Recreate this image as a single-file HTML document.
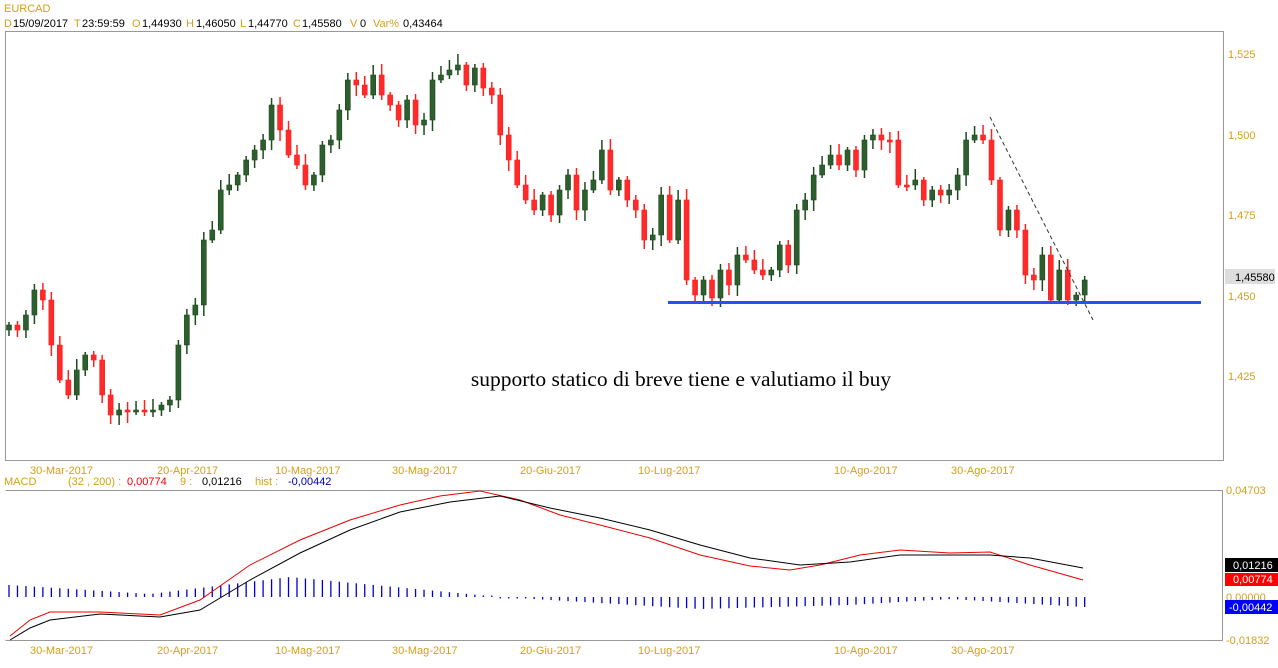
<!DOCTYPE html>
<html><head><meta charset="utf-8"><style>
body{margin:0;background:#fff;width:1278px;height:668px;overflow:hidden;font-family:"Liberation Sans",sans-serif}
svg{position:absolute;left:0;top:0}
.l{fill:#d4a017;font-size:11px}
.v{fill:#000;font-size:11px}
</style></head><body>
<svg id="s" width="1278" height="668" xmlns="http://www.w3.org/2000/svg">
<text x="4" y="12" class="l" font-size="12">EURCAD</text>
<text x="4" y="27" class="l">D</text><text x="13" y="27" class="v">15/09/2017</text>
<text x="74" y="27" class="l">T</text><text x="82" y="27" class="v">23:59:59</text>
<text x="132" y="27" class="l">O</text><text x="142" y="27" class="v">1,44930</text>
<text x="186" y="27" class="l">H</text><text x="196" y="27" class="v">1,46050</text>
<text x="240" y="27" class="l">L</text><text x="248" y="27" class="v">1,44770</text>
<text x="293" y="27" class="l">C</text><text x="302" y="27" class="v">1,45580</text>
<text x="350" y="27" class="l">V</text><text x="360" y="27" class="v">0</text>
<text x="373" y="27" class="l">Var%</text><text x="403" y="27" class="v">0,43464</text>
<path d="M5.5 31.5H1223.5V460.5H5.5Z M5.5 490.5H1222.5V640.5H5.5" fill="none" stroke="#999"/>
<g id="c"></g>
<line x1="668" y1="302.5" x2="1201" y2="302.5" stroke="#2255ee" stroke-width="3"/>
<line x1="990" y1="117" x2="1093" y2="320" stroke="#333" stroke-dasharray="4,3"/>
<text x="681" y="386" text-anchor="middle" font-family="Liberation Serif,serif" font-size="21.5">supporto statico di breve tiene e valutiamo il buy</text>
<text x="1228" y="58" class="l">1,525</text><text x="1228" y="139" class="l">1,500</text><text x="1228" y="219" class="l">1,475</text><text x="1228" y="300" class="l">1,450</text><text x="1228" y="380" class="l">1,425</text>
<rect x="1225" y="269" width="50" height="15" fill="#ddd"/><text x="1235" y="281" class="v">1,45580</text>
<g id="d"></g>
<text x="4" y="485" class="l">MACD</text><text x="68" y="485" class="l">(32 , 200) :</text><text x="127" y="485" fill="#e00" font-size="11">0,00774</text><text x="180" y="485" class="l">9 :</text><text x="202" y="485" class="v">0,01216</text><text x="255" y="485" class="l">hist :</text><text x="288" y="485" fill="#00a" font-size="11">-0,00442</text>
<text x="1226" y="494" class="l">0,04703</text><text x="1226" y="601" class="l">0,00000</text><text x="1226" y="644" class="l">-0,01832</text>
<rect x="1225" y="558" width="53" height="14" fill="#000"/><text x="1233" y="569" fill="#fff" font-size="11">0,01216</text>
<rect x="1225" y="573" width="53" height="13" fill="#f00"/><text x="1233" y="583" fill="#fff" font-size="11">0,00774</text>
<rect x="1225" y="600" width="53" height="14" fill="#00f"/><text x="1229" y="611" fill="#fff" font-size="11">-0,00442</text>
<polyline fill="none" stroke="#e00" points="10,636 30,620 50,612 100,612 160,615 200,600 250,565 300,540 350,520 400,505 440,496 480,491 520,500 560,515 600,525 650,538 700,555 750,566 790,570 820,565 860,555 900,550 950,553 990,552 1030,565 1083,580"/>
<polyline fill="none" stroke="#000" points="10,640 30,628 50,620 100,614 160,617 200,610 250,580 300,553 350,530 400,512 450,502 500,496 550,508 600,518 650,530 700,545 750,558 800,565 850,562 900,555 950,555 990,555 1030,558 1083,568"/>
</svg>
<script>
var Y=[325,330,315,290,300,345,380,395,370,355,360,395,415,410,412,410,412,410,405,400,345,315,305,240,230,190,185,175,160,150,140,105,130,155,165,185,175,145,140,110,80,85,95,75,95,105,120,100,125,120,80,75,70,65,85,68,88,95,135,160,185,200,210,195,215,190,175,210,190,180,150,190,180,200,210,240,235,195,240,200,280,295,280,298,270,285,255,260,270,275,270,245,265,210,200,175,165,155,165,150,170,140,135,140,140,185,185,180,200,190,195,190,175,140,135,140,180,230,210,230,275,280,255,300,270,300,295,280];
var s='',p=330;
function r(i){return ((i*37)%9)+3}
for(var i=0;i<Y.length;i++){var x=9+i*8.47,o=p,c=Y[i],g=c<o,t=Math.min(o,c),b=Math.max(o,c);if(b-t<2){b=t+2}
var col=g?'#1e4a1e':'#ff2020';var bc=g?'#2d5e2d':'#ff2a2a';
s+='<line x1="'+x+'" x2="'+x+'" y1="'+(t-r(i))+'" y2="'+(b+r(i+3))+'" stroke="'+col+'" stroke-width="1.5"/><rect x="'+(x-2.5)+'" y="'+t+'" width="5" height="'+(b-t)+'" fill="'+bc+'" stroke="'+col+'" stroke-width="0.6"/>';p=c;}
document.getElementById('c').innerHTML=s;
var h='';function amp(x){var k=[[9,12],[150,3],[290,20],[500,0],[700,-12],[850,-8],[950,-2],[1083,-10]];for(var j=0;j<k.length-1;j++){if(x<=k[j+1][0]){var f=(x-k[j][0])/(k[j+1][0]-k[j][0]);return k[j][1]+f*(k[j+1][1]-k[j][1])}}return -10}
for(var i=0;i<Y.length;i++){var x=9+i*8.47,a=amp(x);if(Math.abs(a)<1.5)a=a<0?-1.5:1.5;h+='<line x1="'+x+'" x2="'+x+'" y1="597" y2="'+(597-a)+'" stroke="#0000cc" stroke-width="1.3"/>'}
var L=[['30-Mar-2017',30],['20-Apr-2017',157],['10-Mag-2017',275],['30-Mag-2017',392],['20-Giu-2017',520],['10-Lug-2017',638],['10-Ago-2017',834],['30-Ago-2017',951]];
L.forEach(function(l){h+='<text x="'+l[1]+'" y="474" class="l">'+l[0]+'</text><text x="'+l[1]+'" y="654" class="l">'+l[0]+'</text>'});
document.getElementById('d').innerHTML=h;
</script>
</body></html>
